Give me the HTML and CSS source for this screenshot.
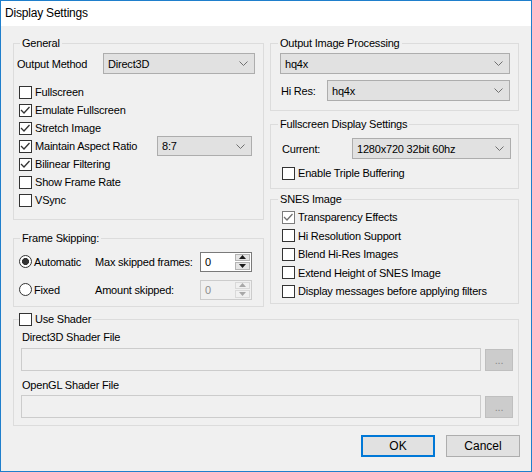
FILE: index.html
```html
<!DOCTYPE html>
<html lang="en">
<head>
    <meta charset="UTF-8">
    <meta name="viewport" content="width=device-width, initial-scale=1.0">
    <title>Display Settings</title>
    <link rel="stylesheet" href="styles.css">
</head>
<body>
<div class="window">
    <div class="titlebar">Display Settings</div>

    <div class="client">
        <div class="columns">
            <div class="column">
                <fieldset class="group general">
                    <legend>General</legend>
                    <div class="general-body">
                        <div class="field-row">
                            <span class="method-label">Output Method</span>
                            <div class="combo method-combo"><span>Direct3D</span><svg class="chevron" width="9" height="5" viewBox="0 0 9 5"><polyline points="0.5,0.5 4.5,4.5 8.5,0.5"/></svg></div>
                        </div>
                        <div class="checks">
                            <label class="check"><span class="box"></span>Fullscreen</label>
                            <label class="check"><span class="box"><svg width="11" height="11" viewBox="0 0 11 11"><polyline points="1,5 4,8 9.5,2"/></svg></span>Emulate Fullscreen</label>
                            <label class="check"><span class="box"><svg width="11" height="11" viewBox="0 0 11 11"><polyline points="1,5 4,8 9.5,2"/></svg></span>Stretch Image</label>
                            <div class="check ratio-row">
                                <span class="box"><svg width="11" height="11" viewBox="0 0 11 11"><polyline points="1,5 4,8 9.5,2"/></svg></span>Maintain Aspect Ratio
                                <div class="combo ratio-combo"><span>8:7</span><svg class="chevron" width="9" height="5" viewBox="0 0 9 5"><polyline points="0.5,0.5 4.5,4.5 8.5,0.5"/></svg></div>
                            </div>
                            <label class="check"><span class="box"><svg width="11" height="11" viewBox="0 0 11 11"><polyline points="1,5 4,8 9.5,2"/></svg></span>Bilinear Filtering</label>
                            <label class="check"><span class="box"></span>Show Frame Rate</label>
                            <label class="check"><span class="box"></span>VSync</label>
                        </div>
                    </div>
                </fieldset>

                <fieldset class="group frames">
                    <legend>Frame Skipping:</legend>
                    <div class="frames-body">
                        <div class="skip-row">
                            <label class="option"><span class="radio on"></span>Automatic</label>
                            <span>Max skipped frames:</span>
                            <div class="spin">
                                <span class="spin-value">0</span>
                                <div class="spin-buttons">
                                    <span class="spin-btn"><svg width="7" height="4" viewBox="0 0 7 4"><polygon points="3.5,0 7,4 0,4"/></svg></span>
                                    <span class="spin-btn"><svg width="7" height="4" viewBox="0 0 7 4"><polygon points="0,0 7,0 3.5,4"/></svg></span>
                                </div>
                            </div>
                        </div>
                        <div class="skip-row second">
                            <label class="option"><span class="radio"></span>Fixed</label>
                            <span>Amount skipped:</span>
                            <div class="spin disabled">
                                <span class="spin-value">0</span>
                                <div class="spin-buttons">
                                    <span class="spin-btn"><svg width="7" height="4" viewBox="0 0 7 4"><polygon points="3.5,0 7,4 0,4"/></svg></span>
                                    <span class="spin-btn"><svg width="7" height="4" viewBox="0 0 7 4"><polygon points="0,0 7,0 3.5,4"/></svg></span>
                                </div>
                            </div>
                        </div>
                    </div>
                </fieldset>
            </div>

            <div class="column">
                <fieldset class="group output">
                    <legend>Output Image Processing</legend>
                    <div class="output-body">
                        <div class="combo filter-combo"><span>hq4x</span><svg class="chevron" width="9" height="5" viewBox="0 0 9 5"><polyline points="0.5,0.5 4.5,4.5 8.5,0.5"/></svg></div>
                        <div class="field-row hires-row">
                            <span class="hires-label">Hi Res:</span>
                            <div class="combo hires-combo"><span>hq4x</span><svg class="chevron" width="9" height="5" viewBox="0 0 9 5"><polyline points="0.5,0.5 4.5,4.5 8.5,0.5"/></svg></div>
                        </div>
                    </div>
                </fieldset>

                <fieldset class="group fullscreen">
                    <legend>Fullscreen Display Settings</legend>
                    <div class="fullscreen-body">
                        <div class="field-row">
                            <span class="current-label">Current:</span>
                            <div class="combo mode-combo"><span>1280x720 32bit 60hz</span><svg class="chevron" width="9" height="5" viewBox="0 0 9 5"><polyline points="0.5,0.5 4.5,4.5 8.5,0.5"/></svg></div>
                        </div>
                        <label class="check triple"><span class="box"></span>Enable Triple Buffering</label>
                    </div>
                </fieldset>

                <fieldset class="group snes">
                    <legend>SNES Image</legend>
                    <div class="snes-body">
                        <label class="check snes-check"><span class="box dim"><svg width="11" height="11" viewBox="0 0 11 11"><polyline points="1,5 4,8 9.5,2"/></svg></span>Transparency Effects</label>
                        <label class="check snes-check"><span class="box"></span>Hi Resolution Support</label>
                        <label class="check snes-check"><span class="box"></span>Blend Hi-Res Images</label>
                        <label class="check snes-check"><span class="box"></span>Extend Height of SNES Image</label>
                        <label class="check snes-check"><span class="box"></span>Display messages before applying filters</label>
                    </div>
                </fieldset>
            </div>
        </div>

        <fieldset class="group shader">
            <legend class="shader-legend"><span class="box"></span>Use Shader</legend>
            <div class="shader-body">
                <div class="file-label">Direct3D Shader File</div>
                <div class="file-row">
                    <div class="file-input"></div>
                    <div class="browse">...</div>
                </div>
                <div class="file-label second">OpenGL Shader File</div>
                <div class="file-row tight">
                    <div class="file-input"></div>
                    <div class="browse">...</div>
                </div>
            </div>
        </fieldset>

        <div class="actions">
            <button class="btn default" type="button">OK</button>
            <button class="btn" type="button">Cancel</button>
        </div>
    </div>
</div>
</body>
</html>
```

FILE: styles.css
```css
body {
    margin: 0;
    font-family: "Liberation Sans", Arial, sans-serif;
    font-size: 11px;
    letter-spacing: -0.2px;
    color: #000;
}

.window {
    width: 532px;
    height: 472px;
    box-sizing: border-box;
    border: 1px solid #1f7fcc;
    background-color: #f0f0f0;
}

.titlebar {
    height: 25px;
    line-height: 25px;
    padding-left: 4px;
    background-color: #ffffff;
    font-size: 12px;
}

.client {
    padding: 11px 12px 0 12px;
}

.columns {
    display: grid;
    grid-template-columns: 251px 249px;
    column-gap: 6px;
    align-items: start;
}

.column {
    display: flex;
    flex-direction: column;
}

/* group boxes */
.group {
    box-sizing: border-box;
    margin: 0;
    padding: 0;
    min-width: 0;
    border: 1px solid #dcdcdc;
}

.group legend {
    margin-left: 6px;
    padding: 0 2px;
    height: 13px;
    line-height: 13px;
}

.general { height: 183px; }
.frames { height: 75px; margin-top: 12px; }
.output { height: 74px; }
.output legend,
.fullscreen legend,
.snes legend { margin-left: 7px; }
.fullscreen { height: 71px; margin-top: 7px; }
.snes { height: 111px; margin-top: 4px; }
.shader { height: 113px; margin-top: 6px; }

/* combo boxes */
.combo {
    box-sizing: border-box;
    height: 21px;
    display: flex;
    align-items: center;
    justify-content: space-between;
    padding: 0 6px 0 4px;
    background-color: #e1e1e1;
    border: 1px solid #adadad;
}

.chevron polyline {
    fill: none;
    stroke: #707070;
    stroke-width: 1;
}

.field-row {
    display: flex;
    align-items: center;
    height: 21px;
}

/* checkboxes */
.check {
    display: flex;
    align-items: center;
    gap: 3px;
    height: 18px;
}

.box {
    box-sizing: border-box;
    width: 13px;
    height: 13px;
    flex: none;
    display: flex;
    align-items: center;
    justify-content: center;
    background-color: #ffffff;
    border: 1px solid #333333;
}

.box polyline {
    fill: none;
    stroke: #333333;
    stroke-width: 1.3;
}

.box.dim { border-color: #7c7c7c; }
.box.dim polyline { stroke: #707070; }

/* general */
.general-body {
    padding: 3px 0 0 3px;
}

.method-label { width: 86px; }
.method-combo { width: 152px; }

.checks {
    display: flex;
    flex-direction: column;
    margin-top: 9px;
    padding-left: 2px;
}

.ratio-combo {
    width: 95px;
    height: 20px;
    margin-left: auto;
    margin-right: 11px;
}

/* frame skipping */
.frames-body {
    padding: 6px 0 0 5px;
}

.skip-row {
    display: grid;
    grid-template-columns: 76px 105px 52px;
    align-items: center;
    height: 21px;
}

.skip-row.second { margin-top: 7px; }

.option {
    display: flex;
    align-items: center;
    gap: 2px;
}

.radio {
    box-sizing: border-box;
    width: 13px;
    height: 13px;
    border-radius: 50%;
    border: 1px solid #333333;
    background-color: #ffffff;
}

.radio.on {
    background: radial-gradient(circle, #333333 3.2px, #ffffff 3.8px);
}

.spin {
    box-sizing: border-box;
    width: 52px;
    height: 20px;
    display: flex;
    border: 1px solid #7a7a7a;
    background-color: #ffffff;
}

.spin-value {
    flex: 1;
    padding-left: 4px;
    line-height: 18px;
}

.spin-buttons {
    width: 15px;
    display: flex;
    flex-direction: column;
    gap: 1px;
    padding: 1px 1px 1px 0;
}

.spin-btn {
    flex: 1;
    display: flex;
    align-items: center;
    justify-content: center;
    background-color: #e5e5e5;
    border: 1px solid #b4b4b4;
}

.spin-btn polygon { fill: #1a1a1a; }

.spin.disabled {
    border-color: #cccccc;
    background-color: #f0f0f0;
    color: #8d8d8d;
}

.spin.disabled .spin-btn {
    background-color: #f0f0f0;
    border-color: #d9d9d9;
}

.spin.disabled .spin-btn polygon { fill: #a8a8a8; }

/* output image processing */
.output-body {
    padding: 3px 0 0 9px;
}

.filter-combo { width: 230px; }
.hires-row { margin-top: 6px; }
.hires-label { width: 46px; padding-left: 1px; }
.hires-combo { width: 183px; }

/* fullscreen display settings */
.fullscreen-body {
    padding: 7px 0 0 11px;
}

.current-label { width: 70px; }
.mode-combo { width: 159px; }
.triple { margin-top: 5px; }

/* snes image */
.snes-body {
    padding: 2px 0 0 11px;
}

.snes-check { height: 18.5px; }

/* shader */
.group .shader-legend {
    display: flex;
    align-items: center;
    gap: 3px;
    margin-left: 5px;
    padding: 0 2px 0 0;
}

.shader-body {
    padding: 5px 0 0 7px;
}

.file-label {
    padding-left: 1px;
    line-height: 13px;
}

.file-label.second { margin-top: 8px; }

.file-row {
    display: flex;
    align-items: flex-end;
    gap: 4px;
    margin-top: 4px;
}

.file-row.tight { margin-top: 3px; }

.file-input {
    box-sizing: border-box;
    width: 460px;
    height: 23px;
    border: 1px solid #cccccc;
    background-color: #f0f0f0;
}

.browse {
    box-sizing: border-box;
    width: 28px;
    height: 22px;
    text-align: center;
    line-height: 20px;
    color: #8a8a8a;
    background-color: #cccccc;
    border: 1px solid #bfbfbf;
}

/* dialog buttons */
.actions {
    display: flex;
    justify-content: flex-end;
    gap: 11px;
    margin: 9px -1px 0 0;
}

.btn {
    box-sizing: border-box;
    width: 74px;
    height: 22px;
    padding: 0;
    font-family: inherit;
    font-size: 12px;
    letter-spacing: 0;
    color: #000;
    background-color: #e1e1e1;
    border: 1px solid #adadad;
}

.btn.default {
    border: 2px solid #0078d7;
}
```
